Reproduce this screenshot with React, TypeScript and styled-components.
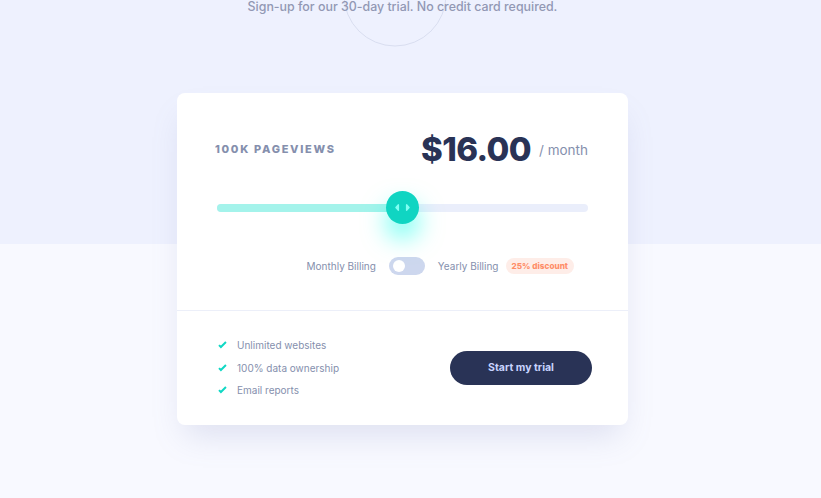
import React, { useState } from "react";
import styled, { createGlobalStyle } from "styled-components";

const GlobalStyle = createGlobalStyle`
  * { box-sizing: border-box; }
  html, body { margin: 0; padding: 0; }
  body {
    font-family: Inter, "Noto Sans", Arial, sans-serif;
    background: #f8f9ff;
    overflow: hidden;
  }
`;

const Page = styled.main`
  min-height: 498px;
  background: linear-gradient(to bottom, #eef1fe 0, #eef1fe 244px, #f8f9ff 244px);
  display: flex;
  flex-direction: column;
  align-items: center;
  padding-right: 16px;
`;

const Hero = styled.header`
  position: relative;
  display: flex;
  justify-content: center;
  width: 451px;
  margin-top: -3px;
`;

const Circle = styled.svg`
  position: absolute;
  left: 165px;
  top: -55px;
`;

const Subtitle = styled.p`
  position: relative;
  margin: 0;
  font-size: 12.4px;
  line-height: 20px;
  color: #9298b4;
  font-weight: 500;
`;

const Card = styled.section`
  width: 451px;
  margin-top: 76px;
  background: #fff;
  border-radius: 8px;
  box-shadow: 0 18px 30px -8px rgba(127, 137, 185, 0.22);
`;

const Top = styled.div`
  padding: 34px 40px 35px 38px;
  border-bottom: 1px solid #eceff9;
`;

const Header = styled.div`
  display: flex;
  align-items: center;
  justify-content: space-between;
  height: 44px;
`;

const Views = styled.span`
  font-size: 11px;
  font-weight: 800;
  letter-spacing: 1.7px;
  color: #858fad;
`;

const Price = styled.div`
  display: flex;
  align-items: center;
  gap: 8px;
`;

const Amount = styled.span`
  font-size: 33px;
  font-weight: 800;
  letter-spacing: -0.6px;
  color: #293356;
`;

const Per = styled.span`
  font-size: 13.5px;
  color: #858fad;
  padding-top: 2px;
`;

const Slider = styled.div`
  position: relative;
  height: 33px;
  margin: 20px 0 0 2px;
  display: flex;
  align-items: center;
`;

const Track = styled.div`
  width: 100%;
  height: 8px;
  border-radius: 4px;
  background: #eaeefb;
  overflow: hidden;
`;

const Fill = styled.div`
  height: 100%;
  background: #a4f3eb;
`;

const Thumb = styled.button`
  position: absolute;
  top: 0;
  width: 33px;
  height: 33px;
  margin-left: -16.5px;
  border: 0;
  border-radius: 50%;
  background: #10d5c2;
  display: flex;
  align-items: center;
  justify-content: center;
  padding: 0;
  box-shadow: 0 14px 24px rgba(0, 255, 231, 0.55);
  cursor: grab;
`;

const Billing = styled.div`
  display: flex;
  align-items: center;
  justify-content: flex-end;
  height: 18px;
  margin-top: 33px;
  padding-right: 14px;
`;

const Label = styled.span<{ $gap: number }>`
  font-size: 10px;
  color: #858fad;
  margin-right: ${(p) => p.$gap}px;
`;

const Toggle = styled.button<{ $on: boolean }>`
  width: 36px;
  height: 18px;
  border: 0;
  padding: 0 4px;
  border-radius: 9px;
  background: ${(p) => (p.$on ? "#7aeadf" : "#cdd7ee")};
  display: flex;
  align-items: center;
  justify-content: ${(p) => (p.$on ? "flex-end" : "flex-start")};
  margin-right: 13px;
  cursor: pointer;
`;

const Knob = styled.span`
  width: 12px;
  height: 12px;
  border-radius: 50%;
  background: #fff;
`;

const Badge = styled.span`
  font-size: 8.2px;
  font-weight: 800;
  color: #ff8d68;
  background: #feede8;
  border-radius: 8px;
  padding: 3px 6px;
`;

const Bottom = styled.div`
  display: flex;
  align-items: center;
  justify-content: space-between;
  padding: 23px 36px 23px 38px;
`;

const Features = styled.ul`
  list-style: none;
  margin: 0;
  padding: 0;
`;

const Feature = styled.li`
  display: flex;
  align-items: center;
  height: 22.5px;
  font-size: 10px;
  color: #858fad;
  gap: 10px;
  padding-left: 3px;
`;

const Cta = styled.button`
  width: 142px;
  height: 34px;
  border: 0;
  border-radius: 17px;
  background: #293356;
  color: #c8d4ff;
  font-family: inherit;
  font-size: 10.5px;
  font-weight: 700;
  cursor: pointer;
`;

const Check = () => (
  <svg width="9" height="8" viewBox="0 0 9 8">
    <path fill="none" stroke="#10d8c4" strokeWidth="2" d="M1 4.134l1.907 1.908L7.949 1" />
  </svg>
);

const SliderIcon = () => (
  <svg width="15" height="9" viewBox="0 0 22 13">
    <path
      fill="#80fff3"
      d="M16 2.558v7.884a1 1 0 001.735.679l3.639-3.943a1 1 0 000-1.356l-3.64-3.943A1 1 0 0016 2.558zM6 2.558v7.884a1 1 0 01-1.735.679L.626 7.178a1 1 0 010-1.356l3.64-3.943A1 1 0 016 2.558z"
    />
  </svg>
);

const features = ["Unlimited websites", "100% data ownership", "Email reports"];

export default function App() {
  const [value] = useState(50);
  const [yearly, setYearly] = useState(false);

  return (
    <Page>
      <GlobalStyle />
      <Hero>
        <Circle width="106" height="106" viewBox="0 0 106 106">
          <circle cx="53" cy="53" r="51" fill="none" stroke="#d9def0" strokeWidth="1" />
        </Circle>
        <Subtitle>Sign-up for our 30-day trial. No credit card required.</Subtitle>
      </Hero>
      <Card>
        <Top>
          <Header>
            <Views>100K PAGEVIEWS</Views>
            <Price>
              <Amount>$16.00</Amount>
              <Per>/ month</Per>
            </Price>
          </Header>
          <Slider>
            <Track>
              <Fill style={{ width: `${value}%` }} />
            </Track>
            <Thumb style={{ left: `${value}%` }} aria-label="pageviews">
              <SliderIcon />
            </Thumb>
          </Slider>
          <Billing>
            <Label $gap={13}>Monthly Billing</Label>
            <Toggle $on={yearly} onClick={() => setYearly(!yearly)} aria-label="billing">
              <Knob />
            </Toggle>
            <Label $gap={7}>Yearly Billing</Label>
            <Badge>25% discount</Badge>
          </Billing>
        </Top>
        <Bottom>
          <Features>
            {features.map((f) => (
              <Feature key={f}>
                <Check />
                {f}
              </Feature>
            ))}
          </Features>
          <Cta>Start my trial</Cta>
        </Bottom>
      </Card>
    </Page>
  );
}
